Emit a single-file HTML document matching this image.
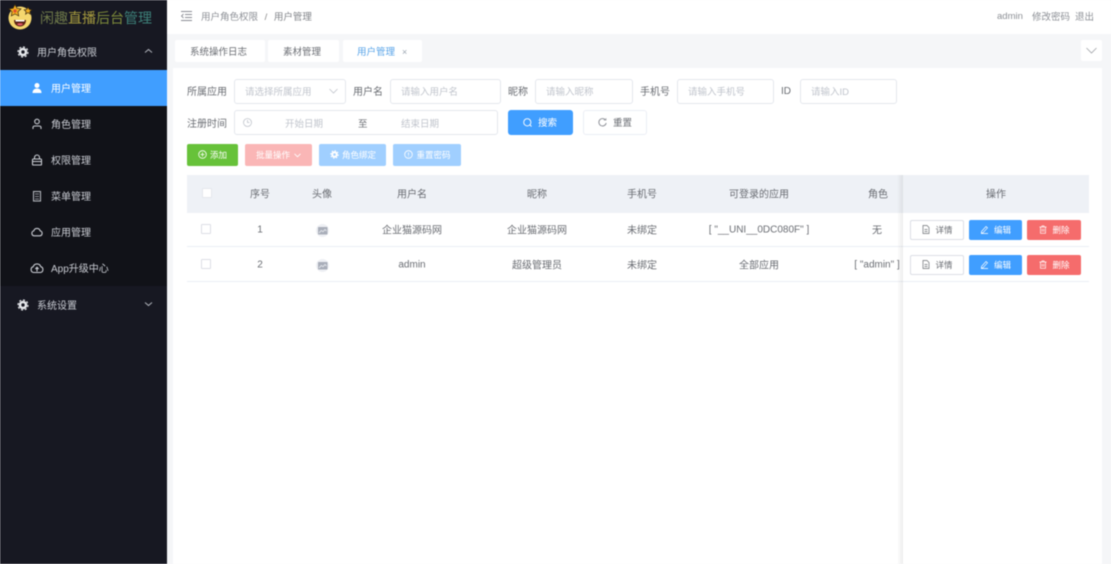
<!DOCTYPE html>
<html lang="zh"><head><meta charset="utf-8"><title>闲趣直播后台管理</title>
<style>
*{box-sizing:border-box}
html,body{margin:0;padding:0;width:1111px;height:564px;overflow:hidden;background:#f5f6f8;font-family:"Liberation Sans","Noto Sans CJK SC",sans-serif;font-size:10px;color:#6a6d73}
#w{position:absolute;left:0;top:0;width:1111px;height:564px;background:#f5f6f8;overflow:hidden;filter:blur(.4px)}
.a{position:absolute;white-space:nowrap}
.t{position:absolute;white-space:nowrap;transform:translate(-50%,-50%)}
.side{position:absolute;left:0;top:0;width:167px;height:564px;background:#171822}
.sub{position:absolute;left:0;top:70px;width:167px;height:216px;background:#111218}
.active{position:absolute;left:0;top:70px;width:167px;height:36px;background:#409eff}
.m{position:absolute;color:#c9ccd3;font-size:10px;white-space:nowrap;line-height:14px}
.ic{position:absolute;fill:none;stroke:currentColor;stroke-width:1.1}
.tab{position:absolute;top:40px;height:22px;background:#fff;border-radius:2px;text-align:center;line-height:26px;color:#6a6d73;font-size:9.5px;overflow:hidden;padding-right:3px}
.card{position:absolute;left:173px;top:68px;width:929px;height:496px;background:#fff}
.l{position:absolute;font-size:10px;color:#6a6d73;line-height:14px;white-space:nowrap}
.in{position:absolute;height:25px;background:#fff;border:1px solid #e4e7ed;border-radius:3px;color:#c0c4cc;font-size:9.5px;line-height:25px;padding-left:10px;white-space:nowrap;overflow:hidden}
.b{position:absolute;height:22px;border-radius:2px;color:#fff;font-size:8.5px;line-height:22px;text-align:center;white-space:nowrap}
.rb{position:absolute;width:54px;height:20px;border-radius:2px;font-size:8.5px;line-height:20px;color:#fff;text-align:center;white-space:nowrap}
.cb{position:absolute;width:10px;height:10px;border:1px solid #dcdfe6;background:#fff;border-radius:1px}
.line{position:absolute;left:187px;width:902px;height:1px;background:#ebeef5}
</style></head><body><div id="w">
<div class="side"></div><div class="sub"></div><div class="active"></div>

<svg class="a" style="left:7px;top:3px" width="26" height="27" viewBox="0 0 26 27">
<circle cx="13" cy="15" r="11.500" fill="#f5d76e"/>
<path d="M8 1.500l1.900 3.800 4.100.6-3 2.900.7 4.100L8 11l-3.700 1.900.7-4.100-3-2.900 4.100-.6z" fill="#f4b021" stroke="#3a2a10" stroke-width=".7"/>
<circle cx="8" cy="8" r="1.700" fill="#e0522c"/>
<path d="M21 4l1.200 2.400 2.600.4-1.900 1.800.5 2.600L21 9.500l-2.400 1.700.5-2.600-1.900-1.800 2.600-.4z" fill="#f4b021" stroke="#3a2a10" stroke-width=".7"/>
<path d="M7 17h12c0 4-2.500 6.500-6 6.500S7 21 7 17z" fill="#5b2314"/>
<path d="M10 21c1-1 5-1 6 0-1 2-5 2-6 0z" fill="#e8586a"/>
<path d="M8.500 17h9v1.500h-9z" fill="#fff"/>
</svg>
<div class="a" style="left:40px;top:9px;font-size:14px;line-height:18px"><span style="color:#6f7a4a">闲趣</span><span style="color:#a59a3e">直播</span><span style="color:#7d8a3a">后台</span><span style="color:#3d8079">管理</span></div>

<svg class="ic" style="left:17px;top:46px;color:#e6e8ec" width="12" height="12" viewBox="0 0 12 12"><circle cx="6" cy="6" r="3" stroke-width="2.600"/><circle cx="6" cy="6" r="5" stroke-width="1.200" stroke-dasharray="2 1.900"/></svg>
<div class="m" style="left:37px;top:47px">用户角色权限</div>
<svg class="ic" style="left:144px;top:48px;color:#a8abb3" width="9" height="6" viewBox="0 0 9 6"><path d="M1 4.500l3.500-3 3.500 3"/></svg>

<svg class="ic" style="left:31px;top:82px;color:#fff" width="12" height="12" viewBox="0 0 12 12"><circle cx="6" cy="3.500" r="2.500" fill="#fff" stroke="none"/><path d="M1.500 11c0-3 2-4.500 4.500-4.500s4.500 1.500 4.500 4.500z" fill="#fff" stroke="none"/></svg>
<div class="m" style="left:51px;top:83px;color:#fff">用户管理</div>

<svg class="ic" style="left:31px;top:118px;color:#c9ccd3" width="12" height="12" viewBox="0 0 12 12"><circle cx="6" cy="3.500" r="2.300"/><path d="M2 11V9.500c0-1 1-1.500 2-1.500h4c1 0 2 .5 2 1.500V11"/></svg>
<div class="m" style="left:51px;top:119px">角色管理</div>

<svg class="ic" style="left:31px;top:154px;color:#c9ccd3" width="12" height="12" viewBox="0 0 12 12"><rect x="1.500" y="5" width="9" height="6" rx=".8"/><path d="M3.500 5V3.500a2.500 2.500 0 0 1 5 0V5M1.500 7.500h9"/></svg>
<div class="m" style="left:51px;top:155px">权限管理</div>

<svg class="ic" style="left:31px;top:190px;color:#b0b3ba" width="12" height="12" viewBox="0 0 12 12"><rect x="2.500" y="1.500" width="7" height="9.500"/><path d="M4 4h4M4 6.500h4M4 9h4" stroke-width=".8"/></svg>
<div class="m" style="left:51px;top:191px">菜单管理</div>

<svg class="ic" style="left:31px;top:226px;color:#c9ccd3" width="12" height="12" viewBox="0 0 12 12"><path d="M3 9.800a2.500 2.500 0 0 1-.2-4.900 3.300 3.300 0 0 1 6.400 0A2.500 2.500 0 0 1 9 9.800z"/></svg>
<div class="m" style="left:51px;top:227px">应用管理</div>

<svg class="ic" style="left:30px;top:262px;color:#c9ccd3" width="14" height="12" viewBox="0 0 14 12"><path d="M3.500 10.500a3 3 0 0 1-.3-5.800 4 4 0 0 1 7.600 0 3 3 0 0 1-.3 5.800z"/><path d="M7 9.500V5.500M5.300 7L7 5.300 8.700 7"/></svg>
<div class="m" style="left:51px;top:263px">App升级中心</div>

<svg class="ic" style="left:17px;top:299px;color:#e6e8ec" width="12" height="12" viewBox="0 0 12 12"><circle cx="6" cy="6" r="3" stroke-width="2.600"/><circle cx="6" cy="6" r="5" stroke-width="1.200" stroke-dasharray="2 1.900"/></svg>
<div class="m" style="left:37px;top:300px">系统设置</div>
<svg class="ic" style="left:144px;top:301px;color:#a8abb3" width="9" height="6" viewBox="0 0 9 6"><path d="M1 1.500l3.500 3 3.500-3"/></svg>

<div class="a" style="left:167px;top:0;width:944px;height:34px;background:#fff"></div>
<svg class="ic" style="left:181px;top:11px;color:#8a8d94" width="11" height="10" viewBox="0 0 11 10"><path d="M0 .5h11M4 3.500h7M4 6.500h7M0 9.500h11M2.500 3L.5 5l2 2" stroke-width=".9"/></svg>
<div class="a" style="left:201px;top:11px;font-size:9.500px;line-height:14px;color:#8d9096">用户角色权限 <span style="margin:0 4px;color:#888">/</span> <span style="color:#808388">用户管理</span></div>
<div class="a" style="left:997px;top:10px;font-size:9.500px;line-height:14px;color:#8d9096">admin</div>
<div class="a" style="left:1032px;top:11px;font-size:9.500px;line-height:14px;color:#8d9096">修改密码</div>
<div class="a" style="left:1075px;top:11px;font-size:9.500px;line-height:14px;color:#8d9096">退出</div>

<div class="tab" style="left:175px;width:90px">系统操作日志</div>
<div class="tab" style="left:268px;width:71px">素材管理</div>
<div class="tab" style="left:343px;width:79px;color:#57a3e8;text-align:left;padding-left:14px;line-height:24px">用户管理<span style="margin-left:7px;color:#9aa4b0;font-size:9px">×</span></div>
<div class="a" style="left:1081px;top:40px;width:21px;height:21px;background:#fff;border-radius:2px"></div>
<svg class="ic" style="left:1086px;top:47px;color:#a0a3a8" width="11" height="7" viewBox="0 0 11 7"><path d="M.5 1l5 5 5-5" stroke-width=".8"/></svg>

<div class="card"></div>

<div class="l" style="left:187px;top:86px">所属应用</div>
<div class="in" style="left:234px;top:79px;width:112px">请选择所属应用</div>
<svg class="ic" style="left:329px;top:88px;color:#c0c4cc" width="9" height="6" viewBox="0 0 9 6"><path d="M.5 1l4 4 4-4" stroke-width=".8"/></svg>
<div class="l" style="left:353px;top:86px">用户名</div>
<div class="in" style="left:390px;top:79px;width:111px">请输入用户名</div>
<div class="l" style="left:508px;top:86px">昵称</div>
<div class="in" style="left:535px;top:79px;width:98px">请输入昵称</div>
<div class="l" style="left:640px;top:86px">手机号</div>
<div class="in" style="left:677px;top:79px;width:97px">请输入手机号</div>
<div class="l" style="left:781px;top:85px">ID</div>
<div class="in" style="left:800px;top:79px;width:97px">请输入ID</div>

<div class="l" style="left:187px;top:118px">注册时间</div>
<div class="in" style="left:234px;top:110px;width:264px"></div>
<svg class="ic" style="left:243px;top:118px;color:#c0c4cc" width="9" height="9" viewBox="0 0 9 9"><circle cx="4.500" cy="4.500" r="4" stroke-width=".8"/><path d="M4.500 2v2.500h2" stroke-width=".8"/></svg>
<div class="a" style="left:285px;top:118px;font-size:9.500px;line-height:14px;color:#c0c4cc">开始日期</div>
<div class="a" style="left:358px;top:118px;font-size:9.500px;line-height:14px;color:#6a6d73">至</div>
<div class="a" style="left:401px;top:118px;font-size:9.500px;line-height:14px;color:#c0c4cc">结束日期</div>

<div class="b" style="left:508px;top:110px;width:65px;height:25px;line-height:27px;background:#409eff;font-size:9.500px;border-radius:3px;padding-left:14px">搜索</div>
<svg class="ic" style="left:523px;top:118px;color:#fff" width="9" height="9" viewBox="0 0 9 9"><circle cx="4.300" cy="4.300" r="3.600" stroke-width=".9"/><path d="M7 7l1.500 1.500" stroke-width=".9"/></svg>
<div class="b" style="left:583px;top:110px;width:64px;height:25px;line-height:25px;background:#fff;border:1px solid #ebeef5;color:#6a6d73;font-size:9.500px;border-radius:3px;padding-left:15px">重置</div>
<svg class="ic" style="left:598px;top:118px;color:#8a8d94" width="9" height="9" viewBox="0 0 9 9"><path d="M7.500 2A3.700 3.700 0 1 0 8.200 5" stroke-width=".9"/><path d="M5.800 2H8V.2" stroke-width=".7"/></svg>

<div class="b" style="left:187px;top:144px;width:51px;background:#67c23a;padding-left:12px">添加</div>
<svg class="ic" style="left:198px;top:150px;color:#fff" width="9" height="9" viewBox="0 0 9 9"><circle cx="4.500" cy="4.500" r="3.800" stroke-width=".8"/><path d="M4.500 2.500v4M2.500 4.500h4" stroke-width=".8"/></svg>
<div class="b" style="left:245px;top:144px;width:67px;background:#fab6b6;padding-right:11px">批量操作</div>
<svg class="ic" style="left:294px;top:153px;color:#fff" width="7" height="5" viewBox="0 0 7 5"><path d="M.5 .8l3 3 3-3" stroke-width=".8"/></svg>
<div class="b" style="left:319px;top:144px;width:67px;background:#a0cfff;padding-left:13px">角色绑定</div>
<svg class="ic" style="left:330px;top:150px;color:#fff" width="9" height="9" viewBox="0 0 12 12"><circle cx="6" cy="6" r="3" stroke-width="2.600"/><circle cx="6" cy="6" r="5" stroke-width="1.400" stroke-dasharray="2 1.900"/></svg>
<div class="b" style="left:393px;top:144px;width:68px;background:#a0cfff;padding-left:13px">重置密码</div>
<svg class="ic" style="left:404px;top:150px;color:#fff" width="9" height="9" viewBox="0 0 9 9"><circle cx="4.500" cy="4.500" r="3.800" stroke-width=".8"/><path d="M4.500 2.500v2.800M4.500 6v.6" stroke-width=".8"/></svg>

<div class="a" style="left:187px;top:175px;width:902px;height:38px;background:#eef1f6"></div>
<div class="cb" style="left:202px;top:188px;border-color:#e4e7ed"></div>
<div class="t" style="left:260px;top:193px">序号</div>
<div class="t" style="left:322px;top:193px">头像</div>
<div class="t" style="left:412px;top:193px">用户名</div>
<div class="t" style="left:537px;top:193px">昵称</div>
<div class="t" style="left:642px;top:193px">手机号</div>
<div class="t" style="left:759px;top:193px">可登录的应用</div>
<div class="t" style="left:878px;top:193px">角色</div>
<div class="t" style="left:996px;top:193px">操作</div>

<div class="line" style="top:246px"></div>
<div class="line" style="top:281px"></div>

<div class="cb" style="left:201px;top:224px"></div>
<div class="t" style="left:260px;top:230px">1</div>
<svg class="a" style="left:316px;top:224px" width="13" height="13" viewBox="0 0 13 13"><circle cx="6.500" cy="6.500" r="6.500" fill="#eef0f4"/><rect x="2" y="3" width="9.500" height="7.500" rx=".6" fill="#a9aeb9"/><path d="M3 9l2.300-2.500 1.700 1.200L9 5.500l1.500 1.500" fill="none" stroke="#dfe2e8" stroke-width="1"/></svg>
<div class="t" style="left:412px;top:229px">企业猫源码网</div>
<div class="t" style="left:537px;top:229px">企业猫源码网</div>
<div class="t" style="left:642px;top:229px">未绑定</div>
<div class="t" style="left:759px;top:230px">[ "__UNI__0DC080F" ]</div>
<div class="t" style="left:877px;top:229px">无</div>

<div class="cb" style="left:201px;top:259px"></div>
<div class="t" style="left:260px;top:265px">2</div>
<svg class="a" style="left:316px;top:259px" width="13" height="13" viewBox="0 0 13 13"><circle cx="6.500" cy="6.500" r="6.500" fill="#eef0f4"/><rect x="2" y="3" width="9.500" height="7.500" rx=".6" fill="#a9aeb9"/><path d="M3 9l2.300-2.500 1.700 1.200L9 5.500l1.500 1.500" fill="none" stroke="#dfe2e8" stroke-width="1"/></svg>
<div class="t" style="left:412px;top:265px">admin</div>
<div class="t" style="left:537px;top:264px">超级管理员</div>
<div class="t" style="left:642px;top:264px">未绑定</div>
<div class="t" style="left:759px;top:264px">全部应用</div>
<div class="t" style="left:877px;top:265px">[ "admin" ]</div>

<div class="a" style="left:897px;top:175px;width:6px;height:389px;background:linear-gradient(90deg,rgba(0,0,0,0),rgba(0,0,0,.07))"></div>

<div class="rb" style="left:910px;top:220px;background:#fff;border:1px solid #dcdfe6;color:#6a6d73;padding-left:14px;line-height:18px">详情</div>
<div class="rb" style="left:969px;top:220px;width:53px;background:#409eff;padding-left:14px">编辑</div>
<div class="rb" style="left:1027px;top:220px;background:#f56c6c;padding-left:14px">删除</div>
<div class="rb" style="left:910px;top:255px;background:#fff;border:1px solid #dcdfe6;color:#6a6d73;padding-left:14px;line-height:18px">详情</div>
<div class="rb" style="left:969px;top:255px;width:53px;background:#409eff;padding-left:14px">编辑</div>
<div class="rb" style="left:1027px;top:255px;background:#f56c6c;padding-left:14px">删除</div>

<svg class="ic" style="left:922px;top:225px;color:#6a6d73" width="8" height="9" viewBox="0 0 8 9"><path d="M1 .5h4l2 2v6H1zM2.500 4.500h3M2.500 6.500h3" stroke-width=".7"/></svg>
<svg class="ic" style="left:922px;top:260px;color:#6a6d73" width="8" height="9" viewBox="0 0 8 9"><path d="M1 .5h4l2 2v6H1zM2.500 4.500h3M2.500 6.500h3" stroke-width=".7"/></svg>
<svg class="ic" style="left:980px;top:225px;color:#fff" width="9" height="9" viewBox="0 0 9 9"><path d="M1.500 6.500L6 1.500l1.500 1.300L3 7.700l-1.700.3zM1 8.500h7" stroke-width=".7"/></svg>
<svg class="ic" style="left:980px;top:260px;color:#fff" width="9" height="9" viewBox="0 0 9 9"><path d="M1.500 6.500L6 1.500l1.500 1.300L3 7.700l-1.700.3zM1 8.500h7" stroke-width=".7"/></svg>
<svg class="ic" style="left:1039px;top:225px;color:#fff" width="8" height="9" viewBox="0 0 8 9"><path d="M.5 2h7M3 2V.8h2V2M1.500 2v6.300h5V2M3.200 3.800v3M4.800 3.800v3" stroke-width=".7"/></svg>
<svg class="ic" style="left:1039px;top:260px;color:#fff" width="8" height="9" viewBox="0 0 8 9"><path d="M.5 2h7M3 2V.8h2V2M1.500 2v6.300h5V2M3.200 3.800v3M4.800 3.800v3" stroke-width=".7"/></svg>
</div></body></html>
